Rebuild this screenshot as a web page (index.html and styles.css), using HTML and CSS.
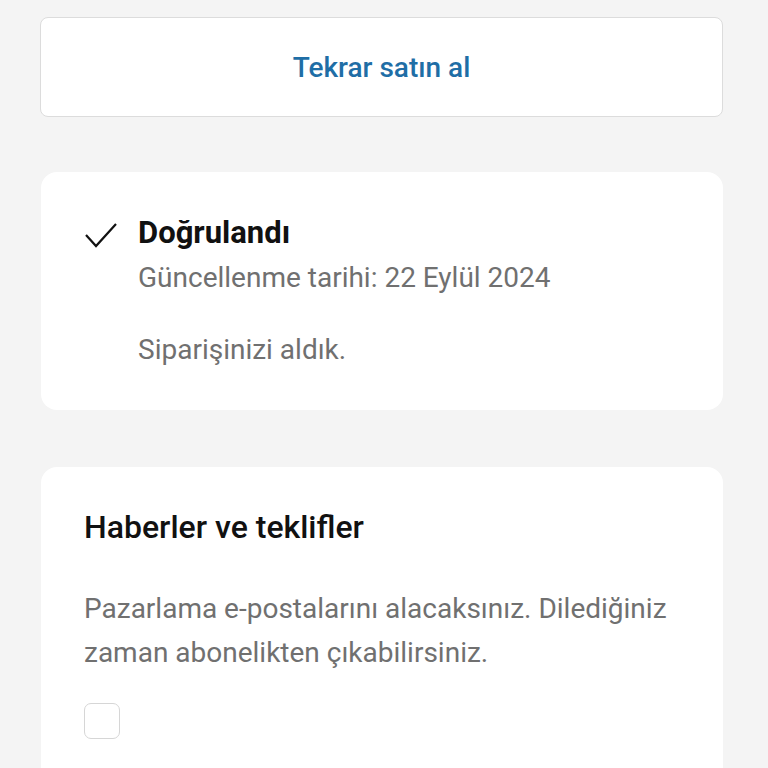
FILE: index.html
```html
<!DOCTYPE html>
<html lang="tr">
<head>
  <meta charset="UTF-8" />
  <meta name="viewport" content="width=device-width, initial-scale=1.0" />
  <title>Sipariş durumu</title>
  <link rel="stylesheet" href="styles.css">
</head>
<body>
  <div class="page">
    <button class="buy-again">Tekrar satın al</button>

    <div class="card status">
      <svg class="check" viewBox="0 0 32 26" width="32" height="26">
        <path d="M1 13 L11 24 L31 2" fill="none" stroke="#111" stroke-width="2.2" />
      </svg>
      <div class="status-body">
        <h2>Doğrulandı</h2>
        <p class="muted">Güncellenme tarihi: 22 Eylül 2024</p>
        <p class="muted note">Siparişinizi aldık.</p>
      </div>
    </div>

    <div class="card news">
      <h2>Haberler ve teklifler</h2>
      <p class="muted">Pazarlama e-postalarını alacaksınız. Dilediğiniz zaman abonelikten çıkabilirsiniz.</p>
      <span class="checkbox"></span>
    </div>
  </div>
</body>
</html>
```

FILE: styles.css
```css
body {
  font-family: Roboto, "Noto Sans", sans-serif;
  background: #f4f4f4;
  margin: 0;
}

.page {
  padding: 17px 45px 0 40px;
}

.buy-again {
  display: block;
  width: 100%;
  height: 100px;
  background: #fff;
  border: 1px solid #dcdcdc;
  border-radius: 8px;
  font-family: inherit;
  font-size: 28px;
  font-weight: 500;
  color: #1f6ea6;
}

.card {
  background: #fff;
  border-radius: 16px;
  margin-left: 1px;
}

.status {
  display: flex;
  margin-top: 55px;
  padding: 44px 44px 40px 44px;
  height: 238px;
  box-sizing: border-box;
}

.check {
  margin-top: 6px;
  margin-right: 21px;
  flex-shrink: 0;
}

h2 {
  margin: 0;
  font-size: 31px;
  font-weight: 700;
  color: #111;
  line-height: 34px;
}

.muted {
  margin: 0;
  font-size: 28px;
  color: #707070;
  line-height: 44px;
}

.status .muted {
  margin-top: 6px;
}

.status .note {
  margin-top: 28px;
}

.news {
  margin-top: 57px;
  padding: 43px 43px 40px 43px;
  height: 320px;
  box-sizing: border-box;
}

.news h2 {
  font-weight: 500;
  font-size: 32px;
}

.news .muted {
  margin-top: 43px;
}

.checkbox {
  display: block;
  width: 34px;
  height: 34px;
  margin-top: 28px;
  border: 1.5px solid #d6d6d6;
  border-radius: 7px;
}
```
